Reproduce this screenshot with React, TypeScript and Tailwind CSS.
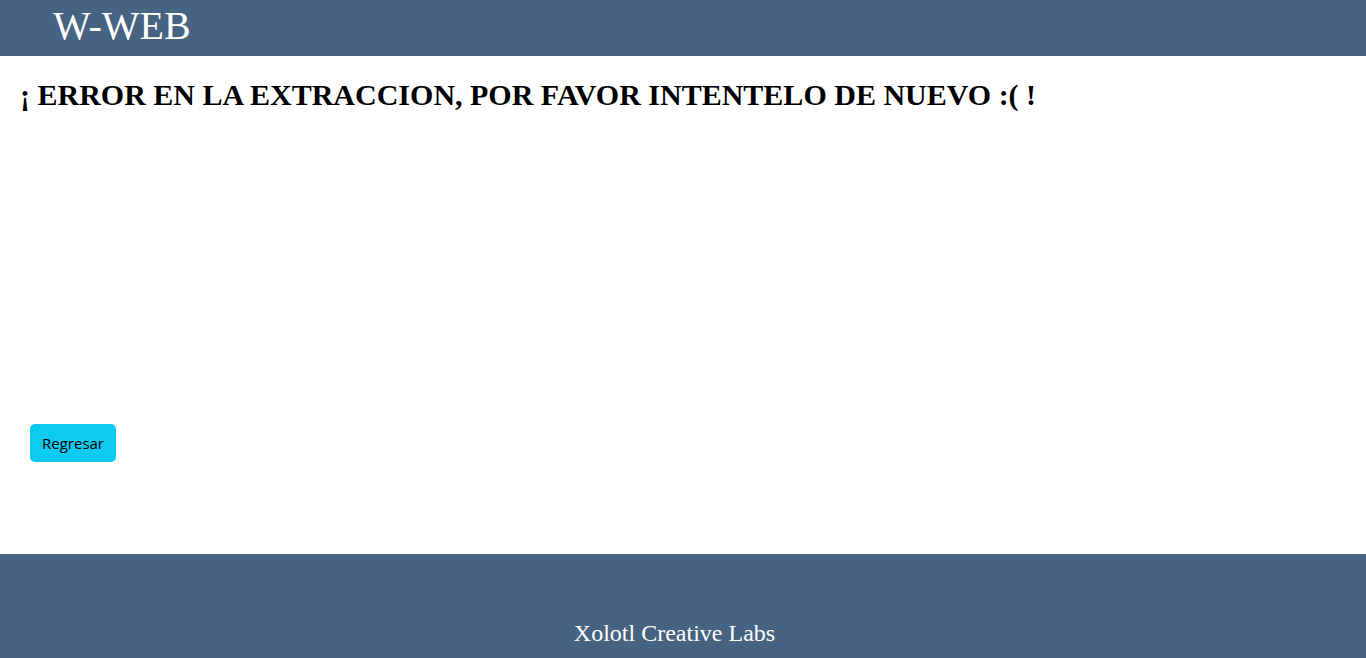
import React from 'react';

const App: React.FC = () => {
  return (
    <div className="min-h-screen bg-white font-['Liberation_Serif',serif]">
      <header className="h-14 bg-[#466481] pl-[53px] pb-1 flex items-center">
        <h1 className="text-[40px] leading-none text-white">W-WEB</h1>
      </header>

      <main className="h-[498px] px-5 pt-6">
        <h2 className="text-[30px] font-bold leading-none text-black">
          ¡ ERROR EN LA EXTRACCION, POR FAVOR INTENTELO DE NUEVO :( !
        </h2>
        <div className="mt-[314px] pl-[10px]">
          <button className="h-[38px] px-3 rounded-[5px] bg-[#0dcaf0] text-black text-[15px] font-['Open_Sans',sans-serif]">
            Regresar
          </button>
        </div>
      </main>

      <footer className="h-[130px] bg-[#466481] pt-[61px] pr-[17px] text-center">
        <p className="text-[24px] text-white">Xolotl Creative Labs</p>
      </footer>
    </div>
  );
};

export default App;
